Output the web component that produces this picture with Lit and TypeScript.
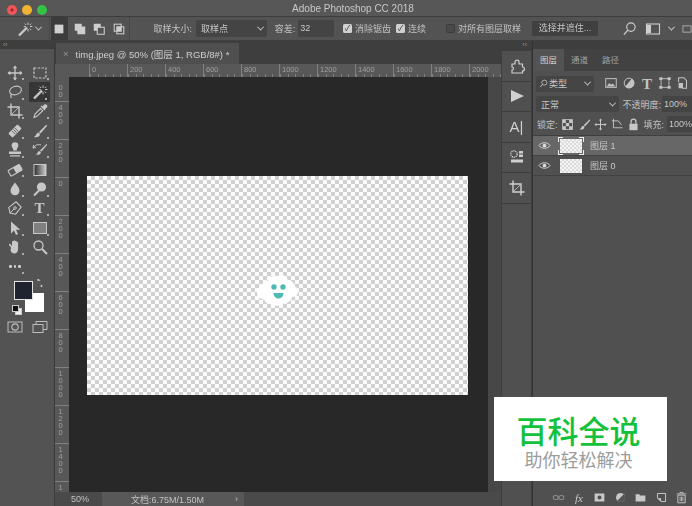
import { LitElement, html, css, svg } from 'lit';
import { customElement } from 'lit/decorators.js';

const ic = (body: unknown, size = 16, box = 16) => html`<svg
  width=${size}
  height=${size}
  viewBox="0 0 ${box} ${box}"
  fill="none"
  stroke="currentColor"
  stroke-width="1.3"
>${body}</svg>`;

const wand = svg`<path d="M2 14.5 10 6.5" stroke-width="2.4"/><path d="M11 1.5v2.4M11 8v2.4M6.8 5.500h2M13 5.500h2.400M7.800 2.600l1.400 1.400M12.800 7.600l1.400 1.400M14.200 2.600l-1.400 1.400" stroke-width="1"/>`;

// toolbar, left to right, top to bottom. text marks a tool drawn as a letter
const TOOLS: Array<{ body?: unknown; text?: string; active?: boolean; corner?: boolean }> = [
  { body: svg`<path d="M8 1.500v13M1.500 8h13" stroke-width="1.300"/><path d="M8 .5 5.800 3.200h4.400zM8 15.500l-2.200-2.700h4.400zM.5 8l2.700-2.200v4.400zM15.500 8l-2.700-2.200v4.400z" fill="currentColor" stroke="none"/>`, corner: true },
  { body: svg`<rect x="2" y="3" width="12" height="10" stroke-dasharray="2.400 1.400" stroke-width="1.200"/>`, corner: true },
  { body: svg`<ellipse cx="8.500" cy="6.500" rx="6" ry="4.200" transform="rotate(-15 8.500 6.500)" stroke-width="1.100"/><path d="M5 10c-1.600 1-1.600 2.600-.4 4" stroke-width="1.100"/>`, corner: true },
  { body: wand, active: true, corner: true },
  { body: svg`<path d="M4 .5v11.500h11.500M.5 4H12v11.500" stroke-width="1.400"/><path d="M5 11 11 5" stroke-width=".8"/>`, corner: true },
  { body: svg`<path d="M2 14.500 3 11l5.500-5.500 2.200 2.200L5 13.300z" stroke-width="1.100"/><path d="m9 3 4 4M10.400 4.400 12.600 2a1.500 1.500 0 0 1 2 2l-2.400 2.200z" fill="currentColor" stroke-width="1.200"/>`, corner: true },
  { body: svg`<g transform="rotate(-45 8 8)"><rect x="1.500" y="5" width="13" height="6" rx="1" fill="currentColor" stroke="none"/><path d="M6 5.600v4.800M8 5.600v4.800M10 5.600v4.800" stroke="#535353" stroke-width=".8"/></g>`, corner: true },
  { body: svg`<path d="M14.500 1.500 7 9l1.500 1.500L15 3z" fill="currentColor" stroke="none"/><path d="M6.400 9.600c-2.400.4-1.600 3-4.400 4.400 2.800.8 6-.4 6-3z" fill="currentColor" stroke="none"/>`, corner: true },
  { body: svg`<path d="M6.200 8.500C6.600 6.500 4.600 5.400 4.600 3.600a3.400 3.400 0 0 1 6.800 0c0 1.800-2 2.900-1.600 4.900zM2 9.500h12v2.600H2zM3 13.200h10v1.300H3z" fill="currentColor" stroke="none"/>`, corner: true },
  { body: svg`<path d="M15 1.500 8 8.500l1.300 1.300L15 3z" fill="currentColor" stroke="none"/><path d="M7.400 9c-2 .4-1.400 2.500-3.600 3.600 2.400.6 5-.2 5-2.400z" fill="currentColor" stroke="none"/><path d="M1 6c2-3 5-4 8-3M1 6l3-.4M1 6l.6-3" stroke-width="1"/>`, corner: true },
  { body: svg`<g transform="rotate(-30 8 8)"><rect x="1.500" y="5" width="13" height="6.500" rx="1" stroke-width="1.100"/><path d="M7.500 5h6a1 1 0 0 1 1 1v4.500a1 1 0 0 1-1 1h-6z" fill="currentColor" stroke="none"/></g>`, corner: true },
  { body: svg`<defs><linearGradient id="grad"><stop offset="0" stop-color="#2c2c2c"/><stop offset="1" stop-color="#d0d0d0"/></linearGradient></defs><rect x="2" y="2.500" width="12" height="11" fill="url(#grad)" stroke-width="1"/>` },
  { body: svg`<path d="M8 1.500c1.800 3 4.500 5 4.500 8.200a4.500 4.500 0 0 1-9 0C3.500 6.500 6.200 4.500 8 1.500z" fill="currentColor" stroke="none"/>`, corner: true },
  { body: svg`<circle cx="9.500" cy="6" r="4.600" fill="currentColor" stroke="none"/><path d="M7 9.500 2 14.500" stroke-width="2"/>`, corner: true },
  { body: svg`<path d="M3 13 1.800 7.400 9 1.800l5.200 5.200L8.600 14.200z" stroke-width="1.100"/><path d="M3 13 7 9" stroke-width="1"/><circle cx="8" cy="8" r="1.300" stroke-width="1"/>`, corner: true },
  { text: 'T', corner: true },
  { body: svg`<path d="M4 1.500v12l3-3 2 4.500 2-.9-2-4.300h4.200z" fill="currentColor" stroke="none"/>`, corner: true },
  { body: svg`<rect x="1.500" y="2.500" width="13" height="11" fill="#808080" stroke-width="1"/>`, corner: true },
  { body: svg`<path d="M4 8.500 2.200 6.200c-.7-.9.500-1.900 1.300-1L5 7V2.800c0-1.100 1.500-1.100 1.500 0V2c0-1.100 1.600-1.100 1.600 0v.6c0-1.100 1.500-1.100 1.500 0v1c0-1 1.500-1 1.500 0V10c0 2.700-1.500 4.500-3.800 4.500-2 0-2.900-1.200-3.800-3z" fill="currentColor" stroke="none"/>`, corner: true },
  { body: svg`<circle cx="6.500" cy="6.500" r="4.500" stroke-width="1.300"/><path d="m10 10 5 5" stroke-width="1.900"/>` },
];

const PANEL_FILTER = [
  svg`<rect x="2" y="3" width="12" height="10" stroke-width="1.100"/><path d="M3 12l3-4 2 2 2-1.500 3 3.500z" fill="currentColor" stroke="none"/>`,
  svg`<circle cx="8" cy="8" r="5.500" stroke-width="1.100"/><path d="M8 2.500a5.500 5.500 0 0 1 0 11z" fill="currentColor" transform="rotate(40 8 8)"/>`,
  null,
  svg`<path d="M3.500 3h9v10h-9z" stroke-width="1"/><path d="M1.500 1.500h3.500v3h-3.500zM11 1.500h3.500v3H11zM1.500 11.500h3.500v3h-3.500zM11 11.500h3.500v3H11z" fill="currentColor" stroke="none"/>`,
  svg`<path d="M3 7V2h6l3 3v9H7" stroke-width="1.200"/><rect x="3" y="8" width="5" height="6" fill="currentColor" stroke="none"/>`,
];

const LOCKS = [
  svg`<rect x="2" y="2" width="12" height="12" stroke-width="1"/><path d="M2 2h4v4H2zM10 2h4v4h-4zM6 6h4v4H6zM2 10h4v4H2zM10 10h4v4h-4z" fill="currentColor" stroke="none"/>`,
  svg`<path d="M14.500 1.500 7 9l1.500 1.500L15 3z" fill="currentColor" stroke="none"/><path d="M6.400 9.600c-2.400.4-1.600 3-4.400 4.400 2.800.8 6-.4 6-3z" fill="currentColor" stroke="none"/>`,
  svg`<path d="M8 2v12M2 8h12" stroke-width="1.200"/><path d="M8 .5 6 3h4zM8 15.500 6 13h4zM.5 8 3 6v4zM15.500 8 13 6v4z" fill="currentColor" stroke="none"/>`,
  svg`<path d="M3 1v11h11M1 3.500h8l4 5" stroke-width="1.100"/>`,
  svg`<rect x="3" y="7" width="10" height="8" fill="currentColor" stroke="none"/><path d="M5 7V4.500a3 3 0 0 1 6 0V7" stroke-width="1.500"/>`,
];

const FOOTER = [
  svg`<rect x="1.500" y="5.500" width="6" height="5" rx="2.500" opacity=".5"/><rect x="8.500" y="5.500" width="6" height="5" rx="2.500" opacity=".5"/>`,
  null,
  svg`<path fill-rule="evenodd" d="M2 3h12v10H2zM8 5.500a2.500 2.500 0 1 0 0 5 2.500 2.500 0 0 0 0-5z" fill="currentColor" stroke="none"/>`,
  svg`<circle cx="8" cy="8" r="5.500" fill="currentColor" stroke="none"/><path d="M4 12a5.500 5.500 0 0 0 8-8z" fill="#535353" stroke="none"/>`,
  svg`<path d="M2 4h4.500l1 1.500H14V13H2z" fill="currentColor" stroke="none"/>`,
  svg`<path d="M3 3h10v10H7.500L3 8.500z" stroke-width="1.200"/><path d="M3 9h4.500v4z" fill="currentColor" stroke="none"/>`,
  svg`<path d="M3.500 5h9v9.500h-9z" stroke-width="1.200"/><path d="M2 3.500h12M6 3V1.800h4V3M6.300 7v5.500M8 7v5.500M9.700 7v5.500" stroke-width="1"/>`,
];

const H_RULER = ['0', '200', '400', '600', '800', '1000', '1200', '1400', '1600', '1800', '2000'];
const V_RULER = ['400', '200', '0', '200', '400', '600', '800', '1000', '1200', '1400', '1600'];

@customElement('app-root')
export class AppRoot extends LitElement {
  static styles = css`
    :host {
      display: flex;
      flex-direction: column;
      width: 692px;
      height: 506px;
      position: relative;
      overflow: hidden;
      background: #535353;
      color: #c2c2c2;
      font: 9px 'Liberation Sans', 'Noto Sans CJK SC', sans-serif;
    }
    svg {
      display: block;
    }
    /* the reference is a soft jpeg, chrome only: the checkerboard stays crisp */
    .title,
    .options,
    .tools,
    .tabs,
    .h-ruler-row,
    .v-ruler,
    .status,
    .dock-body,
    .panel {
      filter: blur(0.35px);
    }

    /* title bar */
    .title {
      height: 17px;
      flex: none;
      display: flex;
      align-items: center;
      position: relative;
      justify-content: center;
      padding-left: 14px;
      box-sizing: border-box;
      background: #575757;
      border-bottom: 1px solid #3d3d3d;
      font-size: 10px;
      color: #c8c8c8;
    }
    .lights {
      position: absolute;
      left: 7px;
      top: 5px;
      display: flex;
      gap: 5px;
    }
    .light {
      width: 10px;
      height: 10px;
      border-radius: 50%;
    }
    .red {
      background: radial-gradient(circle, #a02228 0 1px, #f0555a 2px);
    }
    .yellow {
      background: #f2b430;
    }
    .green {
      background: #35c249;
    }

    /* options bar */
    .options {
      height: 23px;
      flex: none;
      display: flex;
      align-items: center;
      background: #535353;
      border-bottom: 1px solid #404040;
      white-space: nowrap;
    }
    .opt-tool {
      width: 52px;
      padding-left: 17px;
      box-sizing: border-box;
      display: flex;
      align-items: center;
      gap: 3px;
      height: 100%;
      border-right: 1px solid #484848;
      color: #c8c8c8;
    }
    .chev {
      width: 4px;
      height: 4px;
      border-right: 1px solid currentColor;
      border-bottom: 1px solid currentColor;
      transform: rotate(45deg) translate(-1px, -1px);
      flex: none;
    }
    .modes {
      display: flex;
      align-items: center;
      width: 86px;
      height: 100%;
      padding-left: 1px;
      box-sizing: border-box;
      border-right: 1px solid #484848;
      color: #cfcfcf;
    }
    .mode {
      width: 19.500px;
      display: flex;
      justify-content: center;
      align-items: center;
      height: 100%;
    }
    .mode.on {
      width: 17px;
      background: #3b3b3b;
      margin-right: 2px;
    }
    .select {
      display: flex;
      align-items: center;
      justify-content: space-between;
      background: #444;
      border-radius: 2px;
      box-sizing: border-box;
      padding: 0 4px 0 5px;
      color: #c8c8c8;
    }
    .opt-sel {
      width: 75px;
      height: 17px;
      margin: 0 8px 0 4px;
    }
    .label-a {
      margin-left: 23px;
    }
    .input {
      background: #444;
      border-radius: 1px;
      color: #c8c8c8;
      box-sizing: border-box;
    }
    .opt-input {
      width: 38px;
      height: 17px;
      line-height: 17px;
      padding-left: 2px;
      margin: 0 9px 0 3px;
    }
    .check {
      display: flex;
      align-items: center;
      gap: 3px;
    }
    .check-b {
      margin-left: 5px;
    }
    .check-c {
      margin-left: 20px;
    }
    .box {
      width: 9px;
      height: 9px;
      border-radius: 1.500px;
      background: #d0d0d0;
      color: #333;
      font-size: 8px;
      line-height: 9px;
      text-align: center;
      flex: none;
    }
    .box.off {
      background: #4a4a4a;
      border: 1px solid #3a3a3a;
      box-sizing: border-box;
    }
    .opt-btn {
      background: #404040;
      width: 66px;
      height: 15px;
      line-height: 15px;
      text-align: center;
      margin-left: 11px;
      border-radius: 1px;
      flex: none;
    }
    .opt-right {
      display: flex;
      align-items: center;
      gap: 8px;
      margin-left: 24px;
      color: #cfcfcf;
    }

    /* work area */
    .work {
      flex: 1;
      min-height: 0;
      display: flex;
      background: #3e3e3e;
    }
    .strip {
      height: 8px;
      flex: none;
      font-size: 7px;
      line-height: 8px;
      color: #999;
      background: #3e3e3e;
    }

    /* tool column */
    .toolcol {
      width: 55px;
      flex: none;
      display: flex;
      flex-direction: column;
      border-right: 1px solid #3a3a3a;
      box-sizing: border-box;
    }
    .toolcol .strip {
      padding-left: 3px;
    }
    .tools {
      flex: 1;
      background: #535353;
      padding: 14px 0 0 2px;
      position: relative;
    }
    .tool-grid {
      display: grid;
      grid-template-columns: 25px 25px;
      grid-auto-rows: 19.400px;
      color: #c8c8c8;
    }
    .tool {
      display: flex;
      align-items: center;
      justify-content: center;
      position: relative;
    }
    .tool.on {
      background: #363636;
      margin: 0 2px;
    }
    .tool.corner::after {
      content: '';
      position: absolute;
      right: 3px;
      bottom: 2px;
      width: 2px;
      height: 2px;
      background: #aaa;
    }
    .glyph-t {
      font: 700 15px/16px 'Liberation Serif', serif;
    }
    .glyph-fx {
      font: italic 11px/16px 'Liberation Serif', serif;
    }
    .dots {
      grid-column: 1 / 2;
      gap: 2px;
      justify-content: flex-start;
      padding-left: 7px;
    }
    .dots i {
      width: 2.500px;
      height: 2.500px;
      border-radius: 50%;
      background: #d0d0d0;
    }
    .swatches {
      position: relative;
      height: 38px;
      margin-top: 5px;
    }
    .bg-sw {
      position: absolute;
      left: 23px;
      top: 12px;
      width: 19px;
      height: 19px;
      background: #fff;
    }
    .fg-sw {
      position: absolute;
      left: 12px;
      top: 0;
      width: 17px;
      height: 17px;
      background: #1f2330;
      border: 1px solid #e2e2e2;
    }
    .swap {
      position: absolute;
      left: 33px;
      top: -3px;
      color: #ccc;
    }
    .mini {
      position: absolute;
      left: 10px;
      top: 24px;
      width: 7px;
      height: 7px;
      background: #111;
      border: 1px solid #ccc;
      box-sizing: border-box;
    }
    .mini-b {
      left: 13px;
      top: 27px;
      background: #eee;
    }
    .extra {
      display: grid;
      grid-template-columns: 25px 25px;
      color: #bdbdbd;
    }
    .extra > div {
      display: flex;
      justify-content: center;
    }

    /* document */
    .doc {
      width: 446px;
      flex: none;
      display: flex;
      flex-direction: column;
      background: #4a4a4a;
    }
    .tabs {
      height: 23px;
      flex: none;
      background: #3e3e3e;
      padding-top: 2px;
      box-sizing: border-box;
      display: flex;
    }
    .tab {
      width: 183px;
      background: #4f4f4f;
      margin-left: 1px;
      display: flex;
      align-items: center;
      gap: 7px;
      padding-left: 7px;
      box-sizing: border-box;
      font-size: 9.500px;
      color: #cfcfcf;
      white-space: nowrap;
    }
    .tab b {
      font-weight: 400;
      color: #999;
    }
    .h-ruler-row {
      height: 13px;
      flex: none;
      display: flex;
      background: #585858;
      font-size: 7.500px;
      color: #a0a0a0;
      overflow: hidden;
    }
    .h-ruler-row .gap {
      width: 34px;
      flex: none;
    }
    .h-cell {
      width: 38px;
      flex: none;
      box-sizing: border-box;
      padding-left: 2px;
      line-height: 11px;
      background: repeating-linear-gradient(90deg, #808080 0 1px, transparent 1px 7.600px) 0 100% / 100% 3px no-repeat;
      border-left: 1px solid #808080;
    }
    .mid {
      flex: 1;
      min-height: 0;
      display: flex;
    }
    .v-ruler {
      width: 14px;
      flex: none;
      background: #585858;
      overflow: hidden;
      font-size: 7.500px;
      color: #a0a0a0;
    }
    .v-first {
      height: 24px;
      text-align: center;
      line-height: 7px;
      padding-right: 3px;
      box-sizing: border-box;
    }
    .v-cell {
      height: 38px;
      box-sizing: border-box;
      border-top: 1px solid #808080;
      padding-top: 2px;
      padding-right: 3px;
      text-align: center;
      line-height: 7px;
    }
    .canvas {
      width: 419px;
      flex: none;
      background: #282828;
      padding: 99px 0 0 18px;
      box-sizing: border-box;
    }
    .image {
      width: 381px;
      height: 219px;
      display: flex;
      justify-content: center;
      padding-top: 97px;
      box-sizing: border-box;
      background: repeating-conic-gradient(#d0d0d0 0 25%, #fbfbfb 0 50%) 0 0 / 8px 8px;
    }
    .gutter {
      flex: 1;
      background: #474747;
    }
    .status {
      height: 14px;
      flex: none;
      display: flex;
      align-items: center;
      background: #4a4a4a;
      font-size: 9px;
    }
    .zoom {
      width: 47px;
      padding-left: 16px;
      box-sizing: border-box;
    }
    .docinfo {
      width: 142px;
      height: 100%;
      background: #585858;
      display: flex;
      align-items: center;
      justify-content: space-between;
      padding: 0 6px 0 29px;
      box-sizing: border-box;
    }

    /* collapsed dock */
    .dock {
      width: 30px;
      flex: none;
      display: flex;
      flex-direction: column;
      margin-right: 1px;
    }
    .dock .strip {
      text-align: right;
      padding-right: 4px;
    }
    .dock-body {
      flex: 1;
      margin: 2px 0 0 1px;
      background: #505050;
    }
    .dock-btn {
      height: 30.500px;
      border-bottom: 1px solid #3c3c3c;
      box-sizing: border-box;
      display: flex;
      align-items: center;
      justify-content: center;
      color: #d0d0d0;
    }
    .glyph-a {
      font-size: 15px;
      line-height: 16px;
    }

    /* layers panel */
    .panel {
      flex: 1;
      min-width: 0;
      display: flex;
      flex-direction: column;
      border-left: 1px solid #333;
    }
    .ptabs {
      height: 22px;
      flex: none;
      background: #424242;
      display: flex;
      align-items: center;
      font-size: 8.500px;
      color: #a0a0a0;
    }
    .ptab {
      padding: 0 7px;
      height: 100%;
      line-height: 22px;
    }
    .ptab.on {
      background: #535353;
      color: #d0d0d0;
    }
    .pbody {
      flex: 1;
      min-height: 0;
      background: #505050;
      display: flex;
      flex-direction: column;
    }
    .pfilter {
      display: flex;
      align-items: center;
      padding: 5px 0 0 3px;
      height: 15px;
      flex: none;
    }
    .pfilter .select {
      width: 58px;
      height: 16px;
      margin-right: 8px;
      background: #454545;
    }
    .pf-name {
      display: flex;
      align-items: center;
      gap: 1px;
      margin-left: -2px;
    }
    .pf-icons {
      display: flex;
      color: #c4c4c4;
    }
    .pf-icons > div {
      width: 18px;
      display: flex;
      justify-content: center;
    }
    .pblend {
      display: flex;
      align-items: center;
      padding: 5px 0 0 3px;
      flex: none;
      white-space: nowrap;
    }
    .pblend .select {
      width: 85px;
      height: 16px;
      background: #454545;
      margin-right: 3px;
    }
    .plock {
      display: flex;
      align-items: center;
      padding: 4px 0 3px 4px;
      flex: none;
      white-space: nowrap;
      border-bottom: 1px solid #3e3e3e;
    }
    .pct {
      width: 30px;
      height: 16px;
      line-height: 16px;
      padding-left: 2px;
      margin-left: 1px;
      flex: none;
    }
    .pct-fill {
      margin-left: 3px;
    }
    .locks {
      display: flex;
      margin: 0 0 0 2px;
      width: 84px;
      flex: none;
      color: #c8c8c8;
    }
    .locks > div {
      width: 16.500px;
      display: flex;
      justify-content: center;
    }
    .layer {
      height: 20px;
      flex: none;
      display: flex;
      align-items: center;
      border-bottom: 1px solid #424242;
      box-sizing: border-box;
      color: #c8c8c8;
    }
    .layer.on {
      background: #676767;
    }
    .eye {
      width: 22px;
      display: flex;
      justify-content: center;
      color: #ddd;
    }
    .thumb {
      width: 22px;
      height: 14px;
      margin: 0 8px 0 5px;
      background: repeating-conic-gradient(#dcdcdc 0 25%, #f2f2f2 0 50%) 0 0 / 4px 4px;
      position: relative;
    }
    /* selection brackets round the active layer thumb */
    .layer.on .thumb::after {
      content: '';
      position: absolute;
      inset: -2px;
      --c: #eee;
      background:
        linear-gradient(var(--c), var(--c)) 0 0 / 5px 1px,
        linear-gradient(var(--c), var(--c)) 0 0 / 1px 5px,
        linear-gradient(var(--c), var(--c)) 100% 0 / 5px 1px,
        linear-gradient(var(--c), var(--c)) 100% 0 / 1px 5px,
        linear-gradient(var(--c), var(--c)) 0 100% / 5px 1px,
        linear-gradient(var(--c), var(--c)) 0 100% / 1px 5px,
        linear-gradient(var(--c), var(--c)) 100% 100% / 5px 1px,
        linear-gradient(var(--c), var(--c)) 100% 100% / 1px 5px;
      background-repeat: no-repeat;
    }
    .pspace {
      flex: 1;
    }
    .pfoot {
      height: 17px;
      flex: none;
      display: flex;
      padding-left: 15px;
      color: #c8c8c8;
    }
    .pfoot > div {
      width: 20.800px;
      display: flex;
      justify-content: center;
      align-items: center;
    }

    /* watermark over everything */
    .mark {
      position: absolute;
      left: 494px;
      top: 397px;
      width: 173px;
      height: 84px;
      padding-right: 4px;
      box-sizing: border-box;
      background: #fff;
      display: flex;
      flex-direction: column;
      align-items: center;
      font-family: 'Noto Sans CJK SC', sans-serif;
    }
    .mark-main {
      font-size: 31px;
      line-height: 36px;
      margin-top: 15px;
      font-weight: 500;
      color: #14c13c;
    }
    .mark-sub {
      font-size: 18px;
      line-height: 22px;
      color: #9c9c9c;
    }
  `;

  render() {
    return html`
      <div class="title">
        <div class="lights">
          <div class="light red"></div>
          <div class="light yellow"></div>
          <div class="light green"></div>
        </div>
        Adobe Photoshop CC 2018
      </div>

      <div class="options">
        <div class="opt-tool">${ic(wand)}<div class="chev"></div></div>
        <div class="modes">
          <div class="mode on">${ic(svg`<rect x="3" y="3" width="10" height="10" fill="currentColor" stroke="none"/>`, 14)}</div>
          <div class="mode">${ic(svg`<path d="M2 2h8v3h4v9H5v-4H2z" fill="currentColor" stroke="none"/>`, 14)}</div>
          <div class="mode">${ic(svg`<path d="M2 2h8v8H2z" fill="currentColor" stroke="none"/><rect x="6" y="6" width="8" height="8" fill="#535353" stroke-width="1.200"/>`, 14)}</div>
          <div class="mode">${ic(svg`<rect x="2.500" y="2.500" width="8" height="8" stroke-width="1.200"/><rect x="5.500" y="5.500" width="8" height="8" stroke-width="1.200"/><rect x="5.500" y="5.500" width="5" height="5" fill="currentColor" stroke="none"/>`, 14)}</div>
        </div>
        <span class="label-a">取样大小:</span>
        <div class="select opt-sel">取样点<div class="chev"></div></div>
        <span>容差:</span>
        <div class="input opt-input">32</div>
        <div class="check"><div class="box">✓</div>消除锯齿</div>
        <div class="check check-b"><div class="box">✓</div>连续</div>
        <div class="check check-c"><div class="box off"></div>对所有图层取样</div>
        <div class="opt-btn">选择并遮住...</div>
        <div class="opt-right">
          ${ic(svg`<circle cx="9.500" cy="6.500" r="4.500" stroke-width="1.200"/><path d="M6 10 2 14.500" stroke-width="1.400"/>`, 15)}
          ${ic(svg`<rect x="1.500" y="3" width="13" height="10" stroke-width="1.100"/><rect x="2" y="4" width="4" height="8" fill="currentColor" stroke="none"/>`)}
          <div class="chev"></div>
          ${ic(svg`<rect x="1.500" y="3" width="13" height="10" stroke-width="1.100"/>`, 10)}
        </div>
      </div>

      <div class="work">
        <div class="toolcol">
          <div class="strip">‹‹</div>
          <div class="tools">
            <div class="tool-grid">
              ${TOOLS.map(
                (t) => html`<div class="tool ${t.active ? 'on' : ''} ${t.corner ? 'corner' : ''}">
                  ${t.text ? html`<span class="glyph-t">${t.text}</span>` : ic(t.body)}
                </div>`,
              )}
              <div class="tool corner dots"><i></i><i></i><i></i></div>
            </div>
            <div class="swatches">
              <div class="bg-sw"></div>
              <div class="fg-sw"></div>
              <div class="swap">${ic(svg`<path d="M3 3h4M9 9v3M3 3l2-1.500M9 12l-1.500-2" stroke-width="1.400"/>`, 12)}</div>
              <div class="mini mini-b"></div>
              <div class="mini"></div>
            </div>
            <div class="extra">
              <div>${ic(svg`<rect x="1" y="3" width="14" height="10" stroke-width="1"/><circle cx="8" cy="8" r="3.200" stroke-width="1.200"/>`)}</div>
              <div>${ic(svg`<rect x="1" y="5.500" width="10" height="8" stroke-width="1"/><path d="M4 5.500V2.500h11v8h-4" stroke-width="1"/>`)}</div>
            </div>
          </div>
        </div>

        <div class="doc">
          <div class="tabs">
            <div class="tab"><b>×</b><span>timg.jpeg @ 50% (图层 1, RGB/8#) *</span></div>
          </div>
          <div class="h-ruler-row">
            <div class="gap"></div>
            ${H_RULER.map((n) => html`<div class="h-cell">${n}</div>`)}
          </div>
          <div class="mid">
            <div class="v-ruler">
              <div class="v-first"><br />0<br />0</div>
              ${V_RULER.map(
                (n) => html`<div class="v-cell">${n.split('').map((c) => html`${c}<br />`)}</div>`,
              )}
            </div>
            <div class="canvas">
              <div class="image">
                <svg width="46" height="38" viewBox="0 0 46 38">
                  <path
                    d="M13 8c2-5 7-6 10-5 3-2 8-1 10 4 4 0 6 3 6 6 3 1 5 4 4 7-1 3-3 4-6 4-1 5-6 7-9 6-2 3-8 4-11 1-3 1-7-1-8-5-4 0-7-2-7-6 0-3 2-6 5-6 0-3 3-6 6-6z"
                    fill="#fff"
                  />
                  <circle cx="19" cy="14" r="2.700" fill="#4fb9b6" />
                  <circle cx="28" cy="14" r="2.700" fill="#4fb9b6" />
                  <path d="M18.500 20h10c0 3-2 5.500-5 5.500s-5-2.500-5-5.500z" fill="#4fb9b6" />
                </svg>
              </div>
            </div>
            <div class="gutter"></div>
          </div>
          <div class="status">
            <div class="zoom">50%</div>
            <div class="docinfo"><span>文档:6.75M/1.50M</span><span>›</span></div>
          </div>
        </div>

        <div class="dock">
          <div class="strip">‹‹</div>
          <div class="dock-body">
            <div class="dock-btn">${ic(svg`<path d="M3 6h3V4c0-2.500 4-2.500 4 0v2h3.500v3c2.500 0 2.500 4 0 4V15H3v-3c2 0 2-3 0-3z" stroke-width="1.200"/>`)}</div>
            <div class="dock-btn">${ic(svg`<path d="M2 2l13 6-13 6z" fill="currentColor" stroke="none"/>`)}</div>
            <div class="dock-btn"><span class="glyph-a">A|</span></div>
            <div class="dock-btn">${ic(svg`<circle cx="5" cy="5" r="3.200" stroke-width="1.400" stroke-dasharray="1.200 .8"/><path d="M10 2h4v2.500h-4zM10 5.500h4V8h-4z" fill="currentColor" stroke="none"/><rect x="2" y="10.500" width="12" height="3" fill="currentColor" stroke="none"/>`)}</div>
            <div class="dock-btn">${ic(svg`<path d="M4 .5v11.500h11.500M.5 4H12v11.500" stroke-width="1.400"/><path d="M5 11 11 5" stroke-width=".8"/>`)}</div>
          </div>
        </div>

        <div class="panel">
          <div class="strip"></div>
          <div class="ptabs">
            <div class="ptab on">图层</div>
            <div class="ptab">通道</div>
            <div class="ptab">路径</div>
          </div>
          <div class="pbody">
            <div class="pfilter">
              <div class="select">
                <span class="pf-name">${ic(svg`<circle cx="9.500" cy="6.500" r="4.500" stroke-width="1.400"/><path d="M6 10 2 14.500" stroke-width="1.600"/>`, 9)}类型</span>
                <div class="chev"></div>
              </div>
              <div class="pf-icons">
                ${PANEL_FILTER.map(
                  (b) => html`<div>${b ? ic(b, 14) : html`<span class="glyph-t">T</span>`}</div>`,
                )}
              </div>
            </div>
            <div class="pblend">
              <div class="select"><span>正常</span><div class="chev"></div></div>
              不透明度:
              <div class="input pct">100%</div>
            </div>
            <div class="plock">
              锁定:
              <div class="locks">${LOCKS.map((b) => html`<div>${ic(b, 13)}</div>`)}</div>
              填充:
              <div class="input pct pct-fill">100%</div>
            </div>
            ${['图层 1', '图层 0'].map(
              (n, i) => html`<div class="layer ${i === 0 ? 'on' : ''}">
                <div class="eye">${ic(svg`<path d="M1 8c3.500-4.500 10.500-4.500 14 0-3.500 4.500-10.500 4.500-14 0z" stroke-width="1.100"/><circle cx="8" cy="8" r="2.300" fill="currentColor" stroke="none"/>`, 13)}</div>
                <div class="thumb"></div>
                ${n}
              </div>`,
            )}
            <div class="pspace"></div>
            <div class="pfoot">
              ${FOOTER.map((b) => html`<div>${b ? ic(b, 13) : html`<span class="glyph-fx">fx</span>`}</div>`)}
            </div>
          </div>
        </div>
      </div>

      <div class="mark">
        <div class="mark-main">百科全说</div>
        <div class="mark-sub">助你轻松解决</div>
      </div>
    `;
  }
}

declare global {
  interface HTMLElementTagNameMap {
    'app-root': AppRoot;
  }
}
